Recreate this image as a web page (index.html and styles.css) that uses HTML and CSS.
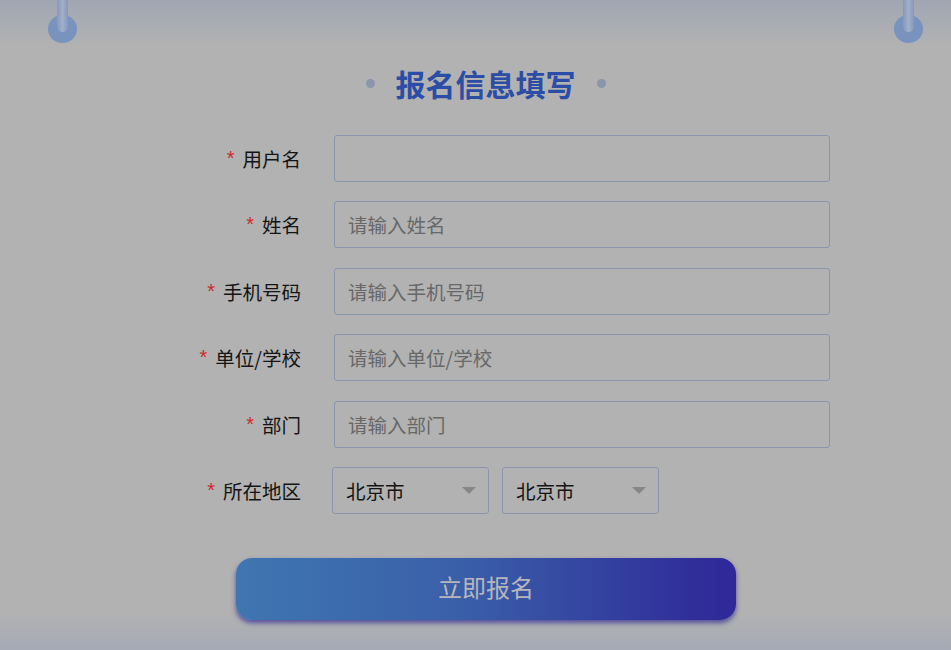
FILE: index.html
```html
<!DOCTYPE html>
<html lang="zh-CN">
<head>
    <meta charset="UTF-8">
    <meta name="viewport" content="width=device-width, initial-scale=1.0">
    <title>报名信息填写</title>
    <link rel="stylesheet" href="styles.css">
</head>
<body>
    <div class="hangers">
        <svg class="hanger" width="29" height="43" viewBox="0 0 29 43">
            <defs>
                <linearGradient id="barL" x1="0" x2="1" y1="0" y2="0">
                    <stop offset="0" stop-color="#8598bb"/>
                    <stop offset="0.5" stop-color="#a2afc7"/>
                    <stop offset="1" stop-color="#8598bb"/>
                </linearGradient>
            </defs>
            <ellipse cx="14.5" cy="29" rx="14.5" ry="14" fill="#7893be"/>
            <rect x="9" y="-6" width="11" height="38" rx="5.5" fill="url(#barL)"/>
        </svg>
        <svg class="hanger" width="29" height="43" viewBox="0 0 29 43">
            <ellipse cx="14.5" cy="29" rx="14.5" ry="14" fill="#7893be"/>
            <rect x="9" y="-6" width="11" height="38" rx="5.5" fill="url(#barL)"/>
        </svg>
    </div>

    <h2 class="title"><span class="dot"></span>报名信息填写<span class="dot"></span></h2>

    <form class="signup" id="signupForm">
        <label class="label" for="username"><em>*</em>用户名</label>
        <input class="field" type="text" id="username">

        <label class="label" for="name"><em>*</em>姓名</label>
        <input class="field" type="text" id="name" placeholder="请输入姓名">

        <label class="label" for="phone"><em>*</em>手机号码</label>
        <input class="field" type="text" id="phone" placeholder="请输入手机号码">

        <label class="label" for="company"><em>*</em>单位/学校</label>
        <input class="field" type="text" id="company" placeholder="请输入单位/学校">

        <label class="label" for="dept"><em>*</em>部门</label>
        <input class="field" type="text" id="dept" placeholder="请输入部门">

        <label class="label" for="province"><em>*</em>所在地区</label>
        <div class="region">
            <div class="picker" id="province">北京市<span class="arrow"></span></div>
            <div class="picker">北京市<span class="arrow"></span></div>
        </div>
    </form>

    <button class="submit" type="submit" form="signupForm">立即报名</button>
</body>
</html>
```

FILE: styles.css
```css
body {
    margin: 0;
    height: 650px;
    overflow: hidden;
    font-family: "Noto Sans CJK SC", "Noto Sans", sans-serif;
    background-color: #b2b2b2;
    background-image:
        linear-gradient(to bottom, #a0a6b2 0, #b2b2b2 46px, #b2b2b2 612px, #a5aab6 650px);
}

.hangers {
    display: flex;
    justify-content: space-between;
    padding: 0 28px 0 48px;
    height: 43px;
}

.hanger {
    display: block;
}

.title {
    display: flex;
    justify-content: center;
    align-items: center;
    gap: 21px;
    margin: 20px 0 0 20px;
    height: 40px;
    font-size: 30px;
    font-weight: 700;
    line-height: 40px;
    color: #2b4da5;
}

.dot {
    width: 9px;
    height: 9px;
    border-radius: 50%;
    background-color: #8a96ad;
}

.signup {
    display: grid;
    grid-template-columns: 120px 496px;
    column-gap: 33px;
    row-gap: 19.4px;
    margin: 32px 0 0 181px;
    width: 649px;
}

.label {
    display: flex;
    justify-content: flex-end;
    align-items: center;
    font-size: 19.5px;
    color: #141414;
    white-space: nowrap;
}

.label em {
    font-style: normal;
    font-family: "Liberation Sans", sans-serif;
    color: #cc2a2c;
    font-size: 20px;
    margin-right: 8px;
}

.field {
    box-sizing: border-box;
    height: 47px;
    width: 100%;
    padding: 0 13px;
    border: 1px solid #8a96ac;
    border-radius: 3px;
    background: transparent;
    font-family: inherit;
    font-size: 19.5px;
    color: #141414;
    outline: none;
}

.field::placeholder {
    color: #686868;
}

.region {
    display: flex;
    gap: 13px;
    margin-left: -2px;
}

.picker {
    box-sizing: border-box;
    display: flex;
    align-items: center;
    justify-content: space-between;
    width: 157px;
    height: 47px;
    padding: 0 12px 0 13px;
    border: 1px solid #8a96ac;
    border-radius: 3px;
    font-size: 19.5px;
    color: #141414;
}

.arrow {
    width: 0;
    height: 0;
    border-left: 7px solid transparent;
    border-right: 7px solid transparent;
    border-top: 7px solid #878787;
}

.submit {
    display: block;
    margin: 44px 0 0 236px;
    width: 500px;
    height: 62px;
    border: none;
    border-radius: 16px;
    background: linear-gradient(to right, #3f76b1 0%, #3a5fa9 45%, #30309a 90%, #2f2899 100%);
    box-shadow: 0 3px 5px rgba(52, 44, 150, 0.75);
    font-family: inherit;
    font-size: 24px;
    line-height: 58px;
    padding: 0 0 4px;
    color: #b6b6bc;
    cursor: pointer;
}
```
